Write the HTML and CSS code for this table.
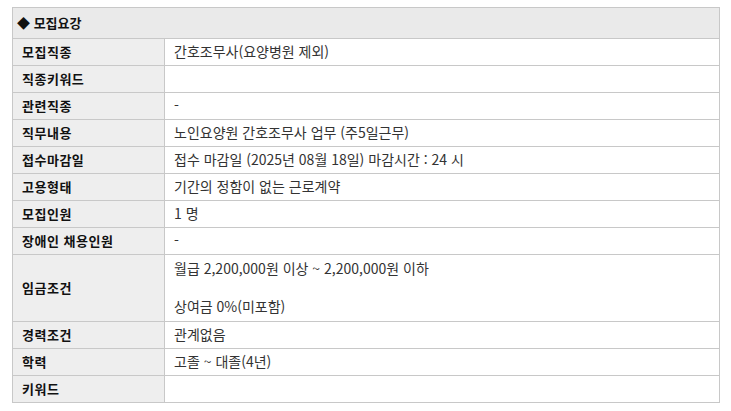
FILE: index.html
```html
<!DOCTYPE html>
<html lang="ko">
<head>
  <meta charset="UTF-8" />
  <title>모집요강</title>
  <link rel="stylesheet" href="styles.css">
</head>
<body>

  <table class="recruit-table">
    <tr>
      <th class="section-title" colspan="2">◆ 모집요강</th>
    </tr>
    <tr>
      <th>모집직종</th>
      <td>간호조무사(요양병원 제외)</td>
    </tr>
    <tr>
      <th>직종키워드</th>
      <td></td>
    </tr>
    <tr>
      <th>관련직종</th>
      <td>-</td>
    </tr>
    <tr>
      <th>직무내용</th>
      <td>노인요양원 간호조무사 업무 (주5일근무)</td>
    </tr>
    <tr>
      <th>접수마감일</th>
      <td>접수 마감일 (2025년 08월 18일) 마감시간 : 24 시</td>
    </tr>
    <tr>
      <th>고용형태</th>
      <td>기간의 정함이 없는 근로계약</td>
    </tr>
    <tr>
      <th>모집인원</th>
      <td>1 명</td>
    </tr>
    <tr>
      <th>장애인 채용인원</th>
      <td>-</td>
    </tr>
    <tr class="tall">
      <th>임금조건</th>
      <td>월급 2,200,000원 이상 ~ 2,200,000원 이하<br><br>상여금 0%(미포함)</td>
    </tr>
    <tr>
      <th>경력조건</th>
      <td>관계없음</td>
    </tr>
    <tr>
      <th>학력</th>
      <td>고졸 ~ 대졸(4년)</td>
    </tr>
    <tr>
      <th>키워드</th>
      <td></td>
    </tr>
  </table>

</body>
</html>
```

FILE: styles.css
```css
body {
  margin: 0;
  padding: 7px 11px 0 12px;
  background-color: #fff;
  font-family: "Noto Sans CJK KR", "Noto Sans", sans-serif;
  font-size: 13px;
  color: #222;
}
.recruit-table {
  width: 100%;
  border-collapse: collapse;
}
.recruit-table th,
.recruit-table td {
  border: 1px solid #c8c8c8;
  height: 19px;
  line-height: 19px;
  padding: 3px 9px 4px;
  text-align: left;
  vertical-align: middle;
}
.recruit-table th {
  width: 133px;
  background-color: #eeeeee;
  font-weight: bold;
  letter-spacing: 0.5px;
  color: #111;
}
.recruit-table td {
  font-size: 14px;
  color: #333;
}
.recruit-table .section-title {
  background-color: #eaeaea;
  padding: 5px 4px 6px;
  letter-spacing: 0;
}
.recruit-table .tall td {
  padding-top: 4px;
  padding-bottom: 5px;
}
```
